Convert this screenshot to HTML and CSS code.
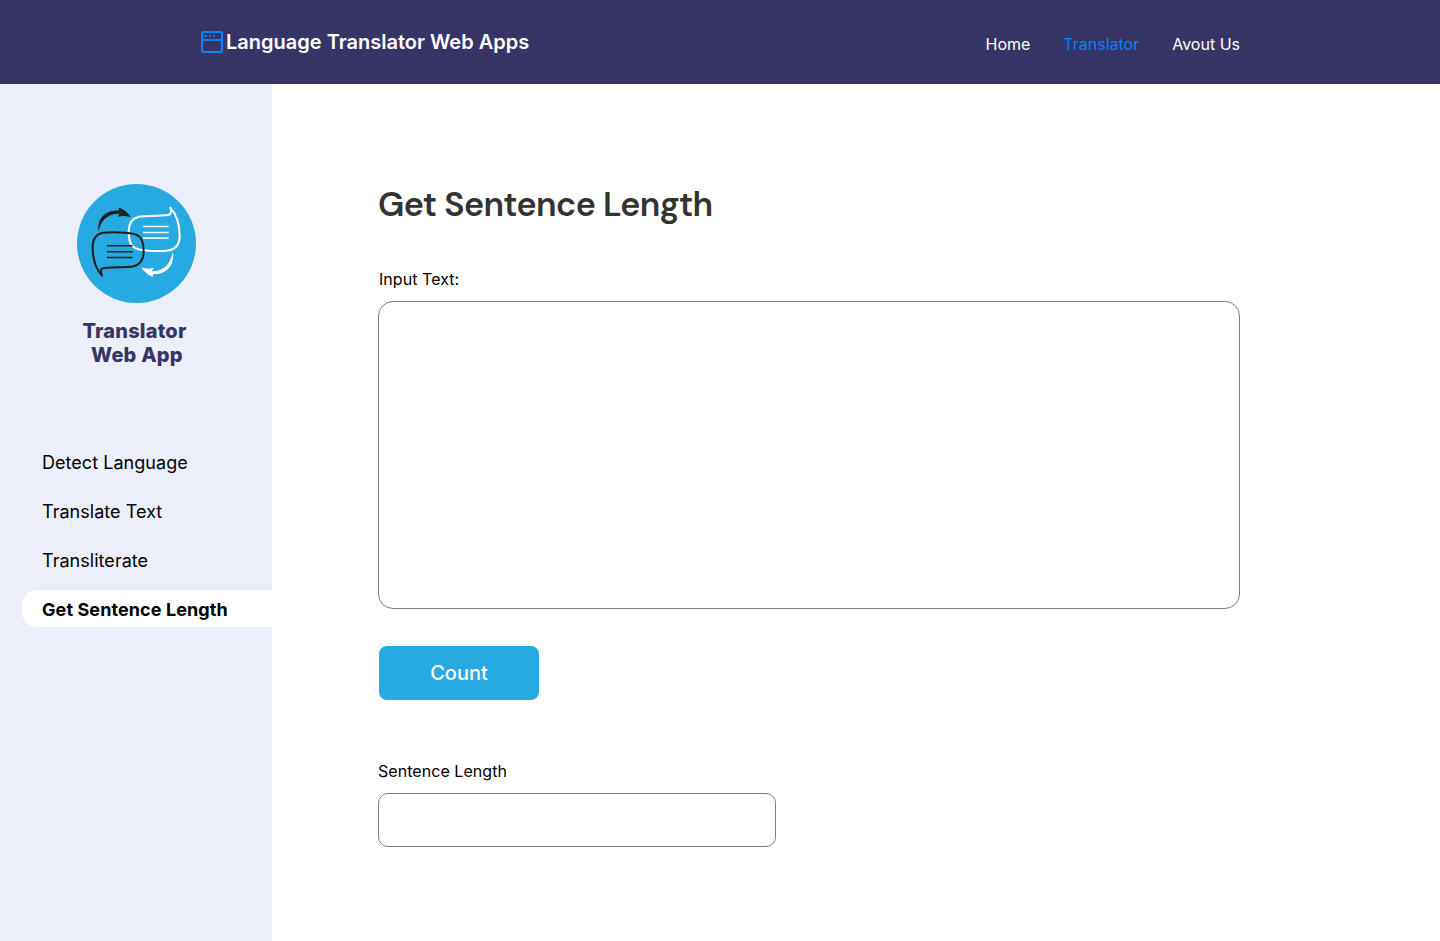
FILE: index.html
```html
<!DOCTYPE html>
<html lang="en">
<head>
<meta charset="utf-8">
<title>Language Translator Web Apps</title>
<link rel="stylesheet" href="styles.css">
</head>
<body>
<header class="topbar">
  <a class="brand">
    <svg class="brand-icon" width="22" height="22" viewBox="0 0 22 22" fill="none" stroke="#0084ff" stroke-width="2">
      <rect x="1" y="1" width="20" height="20" rx="2"/>
      <path d="M1 9H21"/>
      <path d="M4 5H6M8 5H10M12 5H14"/>
    </svg>
    <span class="brand-name">Language Translator Web Apps</span>
  </a>
  <nav class="nav">
    <a class="nav-home">Home</a>
    <a class="nav-translator">Translator</a>
    <a class="nav-about">Avout Us</a>
  </nav>
</header>
<div class="layout">
  <aside class="sidebar">
    <svg class="emblem" width="119" height="119" viewBox="21 23.5 357 357" fill="none">
      <circle cx="199.5" cy="202" r="178.5" fill="#27aae1"/>
      <path stroke="#fff" stroke-width="6" stroke-linejoin="round" d="M301 95C304 104 305 111 299 115C285 121 232 116 206 122C184 128 176 143 176 165C176 190 179 208 196 216C216 226 274 226 294 223C318 219 329 205 329 180C329 145 323 118 301 95Z"/>
      <path stroke="#e9f7fd" stroke-width="5" d="M219 151H296M219 169H296M219 186H296"/>
      <path fill="#fff" d="M309 226C314 266 292 294 249 294L248 302C234 296 222 286 213 273C226 278 239 279 252 275L245 285C282 286 301 264 309 226Z"/>
      <path stroke="#231f20" stroke-width="6" stroke-linejoin="round" d="M96 298C93 289 90 282 95 278C109 270 159 276 188 271C211 266 221 251 221 226C221 202 216 182 198 175C178 168 119 167 99 170C78 174 68 189 68 213C68 248 75 276 96 298Z"/>
      <path stroke="#231f20" stroke-width="4.5" d="M111 209H188M111 227H188M111 244H188"/>
      <path fill="#231f20" d="M86 166C80 126 106 101 147 103L146 94C161 99 174 109 183 124C169 119 157 118 143 122L149 113C114 112 92 132 86 166Z"/>
    </svg>
    <div class="caption">
      <span class="caption-top">Translator</span>
      <span class="caption-bottom">Web App</span>
    </div>
    <ul class="menu">
      <li class="item item-detect">Detect Language</li>
      <li class="item item-translate">Translate Text</li>
      <li class="item item-transliterate">Transliterate</li>
      <li class="item item-active">Get Sentence Length</li>
    </ul>
  </aside>
  <main class="content">
    <h1 class="title">Get Sentence Length</h1>
    <label class="label label-input" for="source">Input Text:</label>
    <textarea class="source" id="source"></textarea>
    <button class="count" type="button">Count</button>
    <label class="label label-result" for="result">Sentence Length</label>
    <input class="result" id="result" type="text">
  </main>
</div>
</body>
</html>
```
FILE: styles.css
```css
* { box-sizing: border-box; }
body {
  margin: 0;
  min-height: 941px;
  background: #fff;
  color: #000;
  font-family: Inter, "Liberation Sans", sans-serif;
  display: flex;
  flex-direction: column;
}
.topbar {
  height: 84px;
  padding: 0 200px 0 201px;
  display: flex;
  justify-content: space-between;
  align-items: center;
  background: #363565;
  color: #fff;
}
.brand { display: flex; align-items: center; gap: 3px; }
.brand-name { font-size: 20px; line-height: 24px; font-weight: 600; white-space: nowrap; }
.nav { display: flex; gap: 33px; padding-top: 4px; font-size: 16px; line-height: 20px; }
.nav-translator { color: #0084ff; }
.layout { flex: 1; display: flex; }
.sidebar { width: 272px; padding-top: 100px; background: #eceff9; }
.emblem { display: block; margin-left: 77px; }
.caption {
  margin: 16px 0 0 82.5px;
  display: flex;
  flex-direction: column;
  color: #363565;
  font-size: 20px;
  line-height: 24px;
  font-weight: 800;
  letter-spacing: 0.2px;
}
.caption-bottom { padding-left: 8.5px; }
.menu {
  list-style: none;
  margin: 76px 0 0;
  padding: 0 0 0 22px;
  display: flex;
  flex-direction: column;
  gap: 12px;
}
.item { height: 37px; padding: 9px 0 0 20px; font-size: 18px; line-height: 22px; letter-spacing: 0.04px; white-space: nowrap; }
.item-active { border-radius: 15px 0 0 15px; background: #fff; font-weight: 700; letter-spacing: 0.09px; }
.content { padding: 97px 0 0 106px; display: flex; flex-direction: column; align-items: flex-start; }
.title {
  margin: 0;
  color: #333;
  font-family: "DM Sans", Inter, sans-serif;
  font-size: 34px;
  line-height: 47px;
  font-weight: 600;
  letter-spacing: -0.61px;
  white-space: nowrap;
}
.label { font-size: 16px; line-height: 20px; letter-spacing: 0.05px; }
.label-input { margin: 41px 0 0 1px; }
.source {
  width: 862px;
  height: 308px;
  margin: 12px 0 0;
  padding: 16px;
  border: 1px solid #7f7f7f;
  border-radius: 15px;
  resize: none;
  font: 16px/20px Inter, sans-serif;
  outline: none;
}
.count {
  width: 160px;
  height: 54px;
  margin: 37px 0 0 1px;
  padding: 0;
  border: 0;
  border-radius: 8px;
  background: #27aae1;
  color: #fff;
  font: 500 20px/24px Inter, sans-serif;
}
.label-result { margin-top: 61px; }
.result {
  width: 398px;
  height: 54px;
  margin: 12px 0 0;
  padding: 0 16px;
  border: 1px solid #7f7f7f;
  border-radius: 10px;
  font: 16px/20px Inter, sans-serif;
  outline: none;
}
```
